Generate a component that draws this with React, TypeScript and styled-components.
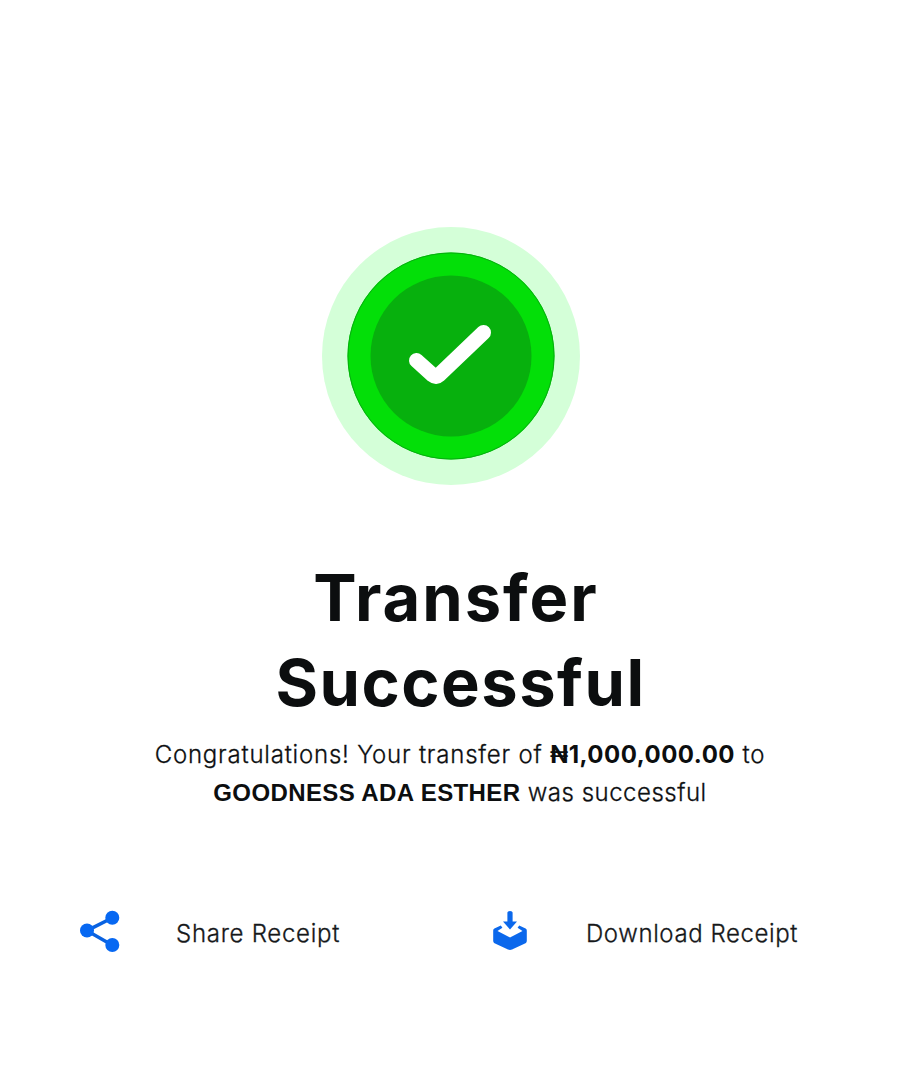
import React from "react";
import styled, { createGlobalStyle } from "styled-components";

const GlobalStyle = createGlobalStyle`
  * { box-sizing: border-box; }
  body { margin: 0; background: #fff; }
`;

const Screen = styled.main`
  width: 902px;
  height: 1080px;
  padding-top: 226px;
  display: flex;
  flex-direction: column;
  align-items: center;
  overflow: hidden;
  background: #fff;
  color: #0c0e0f;
  font-family: Inter, "Liberation Sans", sans-serif;
`;

const Badge = styled.svg`
  display: block;
  width: 260px;
  height: 260px;
  flex: none;
`;

const Title = styled.h1`
  margin: 70px 0 0;
  text-align: center;
  font-size: 65px;
  font-weight: 700;
  line-height: 84.5px;
`;

const Line = styled.span<{ $tracking?: number; $shift?: number }>`
  display: block;
  white-space: nowrap;
  letter-spacing: ${({ $tracking = 0 }) => $tracking}px;
  padding-left: ${({ $shift = 0 }) => $shift}px;
`;

const Message = styled.p`
  margin: 11px 0 0;
  padding-left: 18px;
  text-align: center;
  font-size: 24px;
  font-weight: 300;
  line-height: 38px;
  -webkit-text-stroke: 0.3px #16181a;
`;

const Strong = styled.strong<{ $tracking: number; $family?: string }>`
  font-family: ${({ $family = "inherit" }) => $family};
  font-weight: 700;
  letter-spacing: ${({ $tracking }) => $tracking}px;
  -webkit-text-stroke: 0;
`;

const Actions = styled.div`
  width: 100%;
  margin-top: 98px;
  padding-left: 80px;
  display: grid;
  grid-template-columns: 410px 1fr;
`;

const Action = styled.button<{ $tracking: number }>`
  display: flex;
  align-items: center;
  gap: 56px;
  height: 44px;
  padding: 0;
  border: 0;
  background: none;
  color: #16181a;
  font: 300 24px/44px Inter, "Liberation Sans", sans-serif;
  letter-spacing: ${({ $tracking }) => $tracking}px;
  white-space: nowrap;
  -webkit-text-stroke: 0.3px #16181a;
`;

const Icon = styled.svg`
  width: 40px;
  height: 44px;
  flex: none;
`;

const Label = styled.span`
  padding-top: 4px;
`;

export default function App() {
  return (
    <>
      <GlobalStyle />
      <Screen>
        <Badge viewBox="0 0 260 260" aria-hidden="true">
          <circle cx="130" cy="130" r="129" fill="#d4ffd8" />
          <circle cx="130" cy="130" r="103.5" fill="#03df08" />
          <circle cx="130" cy="130" r="103" fill="none" stroke="#07ad10" strokeWidth="1" />
          <circle cx="130" cy="130" r="80.5" fill="#07b00d" />
          <path d="M95.5 134.5L112 149.3Q115 151.8 118 149L162.5 106.5" fill="none" stroke="#fff" strokeWidth="15" strokeLinecap="round" strokeLinejoin="round" />
        </Badge>
        <Title>
          <Line $tracking={2} $shift={10}>Transfer</Line>
          <Line $tracking={1.5} $shift={19}>Successful</Line>
        </Title>
        <Message>
          <Line $tracking={0.78}>
            Congratulations! Your transfer of <Strong $tracking={0.5}>₦1,000,000.00</Strong> to
          </Line>
          <Line $tracking={0.5}>
            <Strong $tracking={0.4} $family='"Liberation Sans", Arial, sans-serif'>GOODNESS ADA ESTHER</Strong> was successful
          </Line>
        </Message>
        <Actions>
          <Action $tracking={0.72}>
            <Icon viewBox="0 0 40 44">
              <path d="M32 8L7 20.7L32 35" fill="none" stroke="#0a62e0" strokeWidth="3.6" />
              <circle cx="32.3" cy="7.8" r="7" fill="#0768f2" />
              <circle cx="7" cy="20.5" r="7" fill="#0768f2" />
              <circle cx="32.3" cy="35" r="7" fill="#0768f2" />
            </Icon>
            <Label>Share Receipt</Label>
          </Action>
          <Action $tracking={0.6}>
            <Icon viewBox="0 0 40 44" fill="#0b68ec">
              <path d="M17.4 2.6Q17.4 1 20 1T22.6 2.6V11.5H27L20 19.4L13 11.5H17.4Z" />
              <path d="M10.8 15.6L4.4 18.4Q3.2 19 3.2 20.4V31Q3.2 32.5 4.5 33.2L18 39.5Q20 40.4 22 39.5L35.5 33.2Q36.8 32.5 36.8 31V20.4Q36.8 19 35.6 18.4L29.2 15.6L27.6 17.8L32.5 20.9L20 27.4L7.5 20.9L12.4 17.8Z" />
            </Icon>
            <Label>Download Receipt</Label>
          </Action>
        </Actions>
      </Screen>
    </>
  );
}
